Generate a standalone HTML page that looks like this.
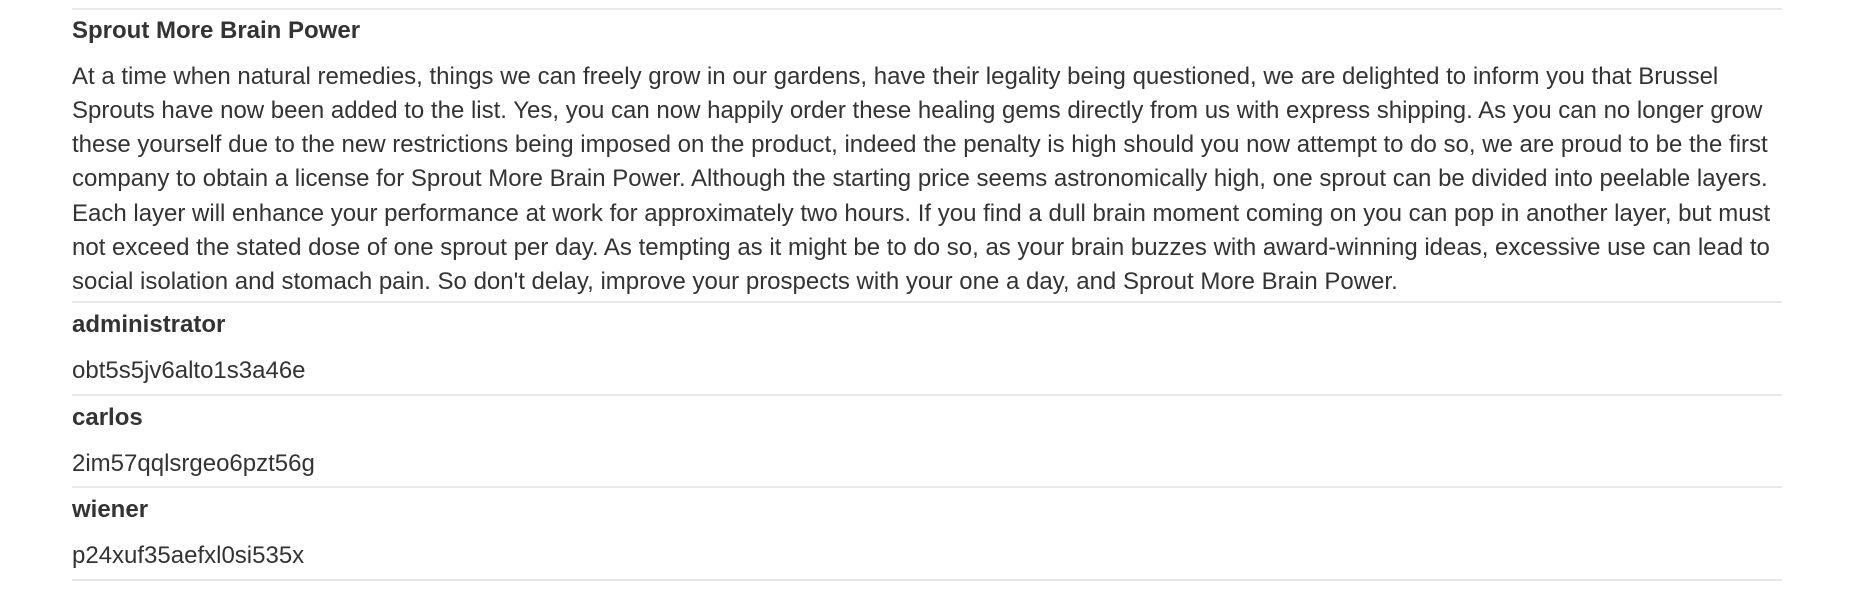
<!DOCTYPE html>
<html><head><meta charset="utf-8"><style>
html,body{margin:0;padding:0;background:#fff;width:1876px;height:596px;overflow:hidden}
body{font-family:"Liberation Sans",Arial,sans-serif;color:#333;font-size:24px;position:relative}
.hr{position:absolute;left:72px;width:1710px;height:0;border-top:2px solid #e8e8e8}
.t{position:absolute;left:72px;white-space:nowrap;line-height:1}
b{font-weight:bold}
</style></head><body>
<div class="hr" style="top:8px"></div>
<div class="t" style="top:19px"><b>Sprout More Brain Power</b></div>
<div class="t" style="top:59.5px;line-height:34.3px">At a time when natural remedies, things we can freely grow in our gardens, have their legality being questioned, we are delighted to inform you that Brussel<br>Sprouts have now been added to the list. Yes, you can now happily order these healing gems directly from us with express shipping. As you can no longer grow<br>these yourself due to the new restrictions being imposed on the product, indeed the penalty is high should you now attempt to do so, we are proud to be the first<br>company to obtain a license for Sprout More Brain Power. Although the starting price seems astronomically high, one sprout can be divided into peelable layers.<br>Each layer will enhance your performance at work for approximately two hours. If you find a dull brain moment coming on you can pop in another layer, but must<br>not exceed the stated dose of one sprout per day. As tempting as it might be to do so, as your brain buzzes with award-winning ideas, excessive use can lead to<br>social isolation and stomach pain. So don't delay, improve your prospects with your one a day, and Sprout More Brain Power.</div>
<div class="hr" style="top:301px"></div>
<div class="t" style="top:313px"><b>administrator</b></div>
<div class="t" style="top:359px">obt5s5jv6alto1s3a46e</div>
<div class="hr" style="top:394px"></div>
<div class="t" style="top:406px"><b>carlos</b></div>
<div class="t" style="top:452px">2im57qqlsrgeo6pzt56g</div>
<div class="hr" style="top:486px"></div>
<div class="t" style="top:498px"><b>wiener</b></div>
<div class="t" style="top:544px">p24xuf35aefxl0si535x</div>
<div class="hr" style="top:579px"></div>
</body></html>
